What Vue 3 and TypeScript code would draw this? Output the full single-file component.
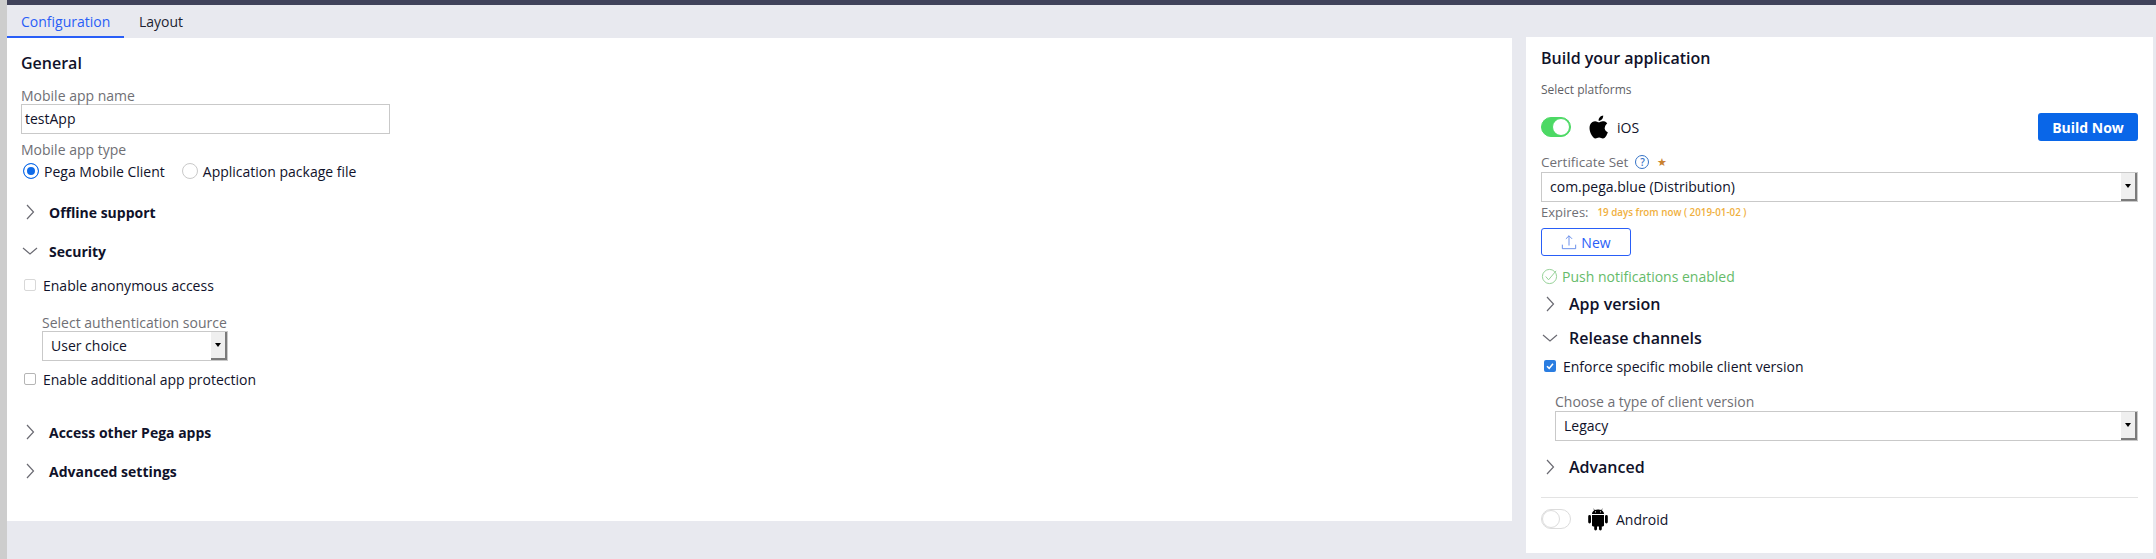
<template>
  <div class="page">
    <div class="topbar"></div>
    <div class="tabs">
      <div class="tab active">Configuration</div>
      <div class="tab">Layout</div>
    </div>
    <div class="columns">
      <section class="main-panel">
        <h2 class="heading">General</h2>
        <label class="label name-label">Mobile app name</label>
        <div class="input name-input">testApp</div>
        <label class="label type-label">Mobile app type</label>
        <div class="radios">
          <span class="radio on"></span><span class="radio-text">Pega Mobile Client</span>
          <span class="radio off"></span><span class="radio-text">Application package file</span>
        </div>

        <div class="section-row first">
          <svg class="chev" viewBox="0 0 16 16"><path :d="chevRight" /></svg>
          <span>Offline support</span>
        </div>
        <div class="section-row security">
          <svg class="chev" viewBox="0 0 16 16"><path :d="chevDown" /></svg>
          <span>Security</span>
        </div>

        <div class="check-row anon">
          <span class="check faded"></span>
          <span>Enable anonymous access</span>
        </div>
        <label class="label auth-label">Select authentication source</label>
        <div class="input select auth-select">
          <span>User choice</span>
          <span class="select-btn"><i></i></span>
        </div>
        <div class="check-row protection">
          <span class="check"></span>
          <span>Enable additional app protection</span>
        </div>

        <div class="section-row access">
          <svg class="chev" viewBox="0 0 16 16"><path :d="chevRight" /></svg>
          <span>Access other Pega apps</span>
        </div>
        <div class="section-row advanced">
          <svg class="chev" viewBox="0 0 16 16"><path :d="chevRight" /></svg>
          <span>Advanced settings</span>
        </div>
      </section>

      <aside class="side-panel">
        <h2 class="heading build">Build your application</h2>
        <div class="platforms">Select platforms</div>

        <div class="platform-row ios">
          <span class="toggle on"><i></i></span>
          <svg class="os-icon apple" viewBox="0 0 24 24"><path d="M18.7 12.7c0-2.4 2-3.6 2.1-3.7-1.1-1.7-2.9-1.900-3.500-1.900-1.500-.2-2.900.9-3.700.9-.8 0-1.900-.9-3.200-.9-1.600 0-3.200 1-4 2.400-1.700 3-.4 7.400 1.200 9.800.8 1.200 1.800 2.500 3 2.500s1.700-.8 3.200-.8 1.900.8 3.200.8 2.200-1.200 3-2.400c.9-1.400 1.300-2.700 1.300-2.800 0 0-2.600-1-2.800-3.900zM16.300 5.400c.7-.8 1.100-2 1-3.200-1 0-2.200.7-2.900 1.500-.6.7-1.200 1.900-1 3 1.100.1 2.200-.5 2.900-1.300z" /></svg>
          <span class="os-name">iOS</span>
          <button class="build-now">Build Now</button>
        </div>

        <div class="label cert-label">
          Certificate Set
          <span class="help">?</span>
          <span class="required">★</span>
        </div>
        <div class="input select wide">
          <span>com.pega.blue (Distribution)</span>
          <span class="select-btn"><i></i></span>
        </div>
        <div class="expires">
          <span class="label expires-label">Expires:</span>
          <span class="expires-val">19 days from now ( 2019-01-02 )</span>
        </div>
        <button class="new-btn">
          <svg viewBox="0 0 18 18"><path d="M9 13V2M5.500 5.500 9 2l3.500 3.500M1.500 12v4.500h15V12" /></svg>
          New
        </button>
        <div class="push">
          <svg viewBox="0 0 18 18"><circle cx="9" cy="9" r="7.500" /><path d="M5 9l3 3.500L16 3" /></svg>
          Push notifications enabled
        </div>

        <div class="side-row app-version">
          <svg class="chev" viewBox="0 0 16 16"><path :d="chevRight" /></svg>
          <span>App version</span>
        </div>
        <div class="side-row release">
          <svg class="chev" viewBox="0 0 16 16"><path :d="chevDown" /></svg>
          <span>Release channels</span>
        </div>
        <div class="check-row enforce">
          <span class="check checked">
            <svg viewBox="0 0 12 12"><path d="M3 6.200 5.200 8.400 9 3.800" /></svg>
          </span>
          <span>Enforce specific mobile client version</span>
        </div>
        <label class="label client-label">Choose a type of client version</label>
        <div class="input select client-select">
          <span>Legacy</span>
          <span class="select-btn"><i></i></span>
        </div>
        <div class="side-row advanced-side">
          <svg class="chev" viewBox="0 0 16 16"><path :d="chevRight" /></svg>
          <span>Advanced</span>
        </div>
        <div class="divider"></div>
        <div class="platform-row android">
          <span class="toggle"><i></i></span>
          <svg class="os-icon" viewBox="0 0 24 24"><path d="M6 8h12v10.200c0 .7-.5 1.200-1.200 1.200h-1v2.700a1.400 1.400 0 0 1-2.800 0v-2.700h-2v2.700a1.400 1.400 0 0 1-2.800 0v-2.700h-1C6.500 19.400 6 18.900 6 18.200zM3.600 8a1.400 1.400 0 0 1 1.400 1.400v5.600a1.400 1.400 0 0 1-2.800 0V9.400A1.400 1.400 0 0 1 3.600 8zM20.400 8a1.400 1.400 0 0 1 1.400 1.400v5.600a1.400 1.400 0 0 1-2.800 0V9.400A1.400 1.400 0 0 1 20.400 8zM15.700 3.300l1-1.500-.3-.2-1.100 1.500A6.500 6.500 0 0 0 12 2.400c-1.200 0-2.300.2-3.300.7L7.600 1.600l-.3.2 1 1.500C6.900 4.200 6 5.500 6 7h12c0-1.500-.9-2.800-2.300-3.700zM9.500 5.400a.6.6 0 1 1 0-1.200.6.600 0 0 1 0 1.200zm5 0a.6.600 0 1 1 0-1.200.6.600 0 0 1 0 1.200z" /></svg>
          <span class="os-name">Android</span>
        </div>
      </aside>
    </div>
  </div>
</template>

<script setup lang="ts">
const chevRight = 'M5 1 11.500 8 5 15'
const chevDown = 'M1 5 8 11 15 5'
</script>

<style>
html,
body {
  margin: 0;
  background: #e8e9ef;
}
</style>

<style scoped>
.page {
  width: 2156px;
  height: 559px;
  overflow: hidden;
  box-sizing: border-box;
  border-left: 7px solid #cdcdcd;
  background: #e8e9ef;
  font-family: "Open Sans", sans-serif;
  font-size: 14px;
  color: #10122a;
}

.topbar {
  height: 5px;
  background: #40425a;
}

.tabs {
  display: flex;
  height: 33px;
  box-sizing: border-box;
}

.tab {
  padding: 7px 29px 0 0;
  line-height: 20px;
  font-size: 14px;
  color: #1d1f33;
}

.tab.active {
  width: 117px;
  box-sizing: border-box;
  padding: 7px 0 0 14px;
  margin-right: 15px;
  color: #295ef7;
  border-bottom: 2px solid #295ef7;
}

.columns {
  display: flex;
  align-items: flex-start;
}

.main-panel {
  width: 1505px;
  height: 483px;
  box-sizing: border-box;
  padding-left: 14px;
  background: #fff;
}

.side-panel {
  width: 627px;
  height: 516px;
  box-sizing: border-box;
  margin: -1px 0 0 14px;
  padding: 0 15px;
  background: #fff;
}

.heading {
  margin: 14px 0 0;
  font-size: 16px;
  line-height: 22px;
  font-weight: 600;
}

.label {
  display: block;
  color: #6f6f75;
  font-size: 14px;
  line-height: 18px;
}

.name-label {
  margin-top: 13px;
}

.input {
  box-sizing: border-box;
  height: 30px;
  border: 1px solid #c9c9c9;
  background: #fff;
  line-height: 28px;
  font-size: 14px;
}

.name-input {
  width: 369px;
  margin-top: -1px;
  padding-left: 3px;
}

.type-label {
  margin-top: 7px;
}

.radios {
  display: flex;
  align-items: center;
  height: 22px;
  margin-top: 1px;
  padding-left: 2px;
}

.radio {
  box-sizing: border-box;
  width: 16px;
  height: 16px;
  border-radius: 50%;
  background: #fff;
}

.radio.on {
  border: 1px solid #0f6be9;
  box-shadow: inset 0 0 0 3px #fff;
  background: #0f6be9;
}

.radio.off {
  border: 1px solid #c9c9c9;
  margin-left: 17px;
}

.radio-text {
  margin-left: 5px;
}

.section-row {
  display: flex;
  align-items: center;
  height: 20px;
  font-weight: 700;
  font-size: 14px;
}

.chev {
  width: 16px;
  height: 16px;
  flex: none;
  fill: none;
  stroke: #6a6a72;
  stroke-width: 1.2;
}

.section-row .chev {
  margin-left: 1px;
  margin-right: 11px;
}

.section-row.first {
  margin-top: 20px;
}

.section-row.security {
  margin-top: 19px;
}

.check-row {
  display: flex;
  align-items: center;
  height: 20px;
}

.check {
  box-sizing: border-box;
  width: 12px;
  height: 12px;
  margin-right: 7px;
  flex: none;
  border: 1px solid #b5b5b5;
  border-radius: 2px;
  background: #fff;
}

.check.faded {
  border-color: #d8d8d8;
}

.check.checked {
  border: none;
  background: #2a7de1;
}

.check.checked svg {
  display: block;
  width: 12px;
  height: 12px;
  fill: none;
  stroke: #fff;
  stroke-width: 1.6;
}

.anon {
  margin: 14px 0 0 3px;
}

.auth-label {
  margin: 19px 0 0 21px;
}

.select {
  display: flex;
  align-items: center;
  justify-content: space-between;
  padding-left: 8px;
}

.select-btn {
  box-sizing: border-box;
  width: 16px;
  height: 28px;
  display: flex;
  align-items: center;
  justify-content: center;
  background: #efefef;
  border-right: 2px solid #7a7a7a;
  border-bottom: 2px solid #7a7a7a;
}

.select-btn i {
  width: 0;
  height: 0;
  border: 3.5px solid transparent;
  border-top: 4px solid #000;
  border-bottom: none;
}

.auth-select {
  width: 186px;
  margin: -1px 0 0 21px;
}

.protection {
  margin: 8px 0 0 3px;
}

.section-row.access {
  margin-top: 33px;
}

.section-row.advanced {
  margin-top: 19px;
}

.heading.build {
  margin-top: 10px;
}

.platforms {
  margin-top: 12px;
  font-size: 12px;
  line-height: 18px;
  color: #5f5f66;
}

.platform-row {
  display: flex;
  align-items: center;
  height: 28px;
}

.ios {
  margin-top: 14px;
}

.toggle {
  position: relative;
  box-sizing: border-box;
  width: 30px;
  height: 20px;
  border-radius: 10px;
  background: #fff;
  border: 1px solid #dcdcdc;
}

.toggle i {
  position: absolute;
  left: 0;
  top: 0;
  width: 18px;
  height: 18px;
  box-sizing: border-box;
  border-radius: 50%;
  background: #fff;
  border: 1px solid #dcdcdc;
}

.toggle.on {
  background: #4cd964;
  border-color: #4cd964;
}

.toggle.on i {
  left: 10px;
  border-color: #4cd964;
}

.os-icon {
  width: 24px;
  height: 24px;
  margin-left: 15px;
  fill: #000;
  flex: none;
}

.os-icon.apple {
  width: 28px;
  height: 28px;
  margin-left: 12px;
}

.os-name {
  margin-left: 6px;
  font-size: 14px;
}

.build-now {
  margin-left: auto;
  width: 100px;
  height: 28px;
  border: none;
  border-radius: 3px;
  background: #0966e8;
  color: #fff;
  font-family: inherit;
  font-weight: 700;
  font-size: 14px;
}

.cert-label {
  display: flex;
  align-items: center;
  margin-top: 12px;
  font-size: 13.5px;
}

.help {
  box-sizing: border-box;
  width: 14px;
  height: 14px;
  margin-left: 7px;
  border: 1px solid #3572c6;
  border-radius: 50%;
  color: #3572c6;
  font-size: 10px;
  font-weight: 600;
  line-height: 12px;
  text-align: center;
}

.required {
  margin-left: 8px;
  font-size: 11px;
  color: #c9822f;
}

.wide {
  margin-top: 1px;
}

.expires {
  display: flex;
  align-items: center;
  height: 18px;
  margin-top: 1px;
}

.expires-label {
  font-size: 13px;
}

.expires-val {
  margin-left: 9px;
  font-size: 9.8px;
  font-weight: 600;
  color: #f0b040;
}

.new-btn {
  display: flex;
  align-items: center;
  justify-content: center;
  gap: 4px;
  width: 90px;
  height: 28px;
  margin-top: 7px;
  padding: 0;
  border: 1px solid #295ef7;
  border-radius: 3px;
  background: #fff;
  color: #295ef7;
  font-family: inherit;
  font-size: 14px;
}

.new-btn svg {
  width: 16px;
  height: 16px;
  fill: none;
  stroke: #5a84e8;
  stroke-width: 1;
}

.push {
  display: flex;
  align-items: center;
  gap: 4px;
  height: 20px;
  margin-top: 10px;
  color: #66bb6a;
}

.push svg {
  width: 17px;
  height: 17px;
  fill: none;
  stroke: #8fce92;
  stroke-width: 1;
}

.side-row {
  display: flex;
  align-items: center;
  height: 22px;
  font-size: 16px;
  font-weight: 600;
}

.side-row .chev {
  margin-left: 1px;
  margin-right: 11px;
}

.app-version {
  margin-top: 7px;
}

.release {
  margin-top: 12px;
}

.enforce {
  margin: 7px 0 0 3px;
}

.client-label {
  margin: 17px 0 0 14px;
}

.client-select {
  margin-left: 14px;
}

.advanced-side {
  margin-top: 15px;
}

.divider {
  height: 1px;
  margin-top: 19px;
  background: #e3e3e3;
}

.android {
  margin-top: 7px;
}
</style>
